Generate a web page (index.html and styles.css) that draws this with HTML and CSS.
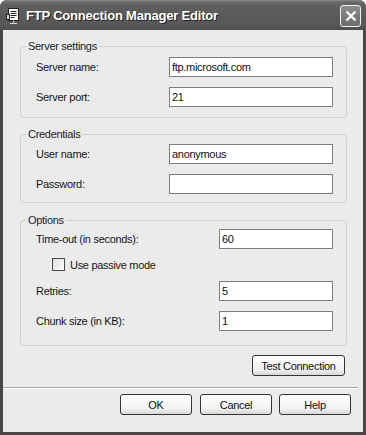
FILE: index.html
```html
<!DOCTYPE html>
<html lang="en">
<head>
  <meta charset="UTF-8">
  <title>FTP Connection Manager Editor</title>
  <link rel="stylesheet" href="styles.css">
</head>
<body>
  <div class="window">
    <div class="titlebar">
      <svg class="app-icon" width="15" height="16" viewBox="0 0 15 16">
        <rect x="2.5" y="0.5" width="10" height="12" fill="#fff" stroke="#222"/>
        <path d="M4.5 3.5h6M4.5 5.5h6M4.5 7.5h6M4.5 9.5h4" stroke="#222"/>
        <rect x="0.5" y="6.5" width="3" height="5" fill="#ddd" stroke="#222"/>
        <path d="M7.5 12.5v2M4 15.5h7" stroke="#ddd"/>
      </svg>
      <span class="title">FTP Connection Manager Editor</span>
      <div class="close">
        <svg width="12" height="12" viewBox="0 0 12 12">
          <path d="M1.5 1.5l9 9M10.5 1.5l-9 9" stroke="#fff" stroke-width="2.4"/>
        </svg>
      </div>
    </div>

    <div class="client">
      <div class="content">
        <fieldset class="group group-server">
          <legend>Server settings</legend>
          <div class="row">
            <label>Server name:</label>
            <input class="field wide" type="text" value="ftp.microsoft.com">
          </div>
          <div class="row">
            <label>Server port:</label>
            <input class="field wide" type="text" value="21">
          </div>
        </fieldset>

        <fieldset class="group group-credentials">
          <legend>Credentials</legend>
          <div class="row">
            <label>User name:</label>
            <input class="field wide" type="text" value="anonymous">
          </div>
          <div class="row">
            <label>Password:</label>
            <input class="field wide" type="password" value="">
          </div>
        </fieldset>

        <fieldset class="group group-options">
          <legend>Options</legend>
          <div class="row">
            <label>Time-out (in seconds):</label>
            <input class="field narrow" type="text" value="60">
          </div>
          <label class="check"><span class="box"></span>Use passive mode</label>
          <div class="row">
            <label>Retries:</label>
            <input class="field narrow" type="text" value="5">
          </div>
          <div class="row">
            <label>Chunk size (in KB):</label>
            <input class="field narrow" type="text" value="1">
          </div>
        </fieldset>

        <div class="test-row">
          <button class="btn btn-test">Test Connection</button>
        </div>
      </div>

      <div class="separator"></div>

      <div class="footer">
        <button class="btn">OK</button>
        <button class="btn">Cancel</button>
        <button class="btn">Help</button>
      </div>
    </div>
  </div>
</body>
</html>
```

FILE: styles.css
```css
body {
  margin: 0;
  padding: 0;
  background-color: #ffffff;
  font-family: "Liberation Sans", Arial, sans-serif;
  font-size: 11px;
  letter-spacing: -0.3px;
  color: #161616;
}
.window {
  width: 366px;
  height: 435px;
  background-color: #474747;
  border-radius: 7px 7px 0 0;
  box-sizing: border-box;
  display: flex;
  flex-direction: column;
}
.titlebar {
  height: 30px;
  display: flex;
  align-items: center;
  padding: 0 5px 0 6px;
  background: linear-gradient(#8a8a8a 0, #6a6a6a 2px, #5e5e5e 6px, #585858 24px, #4e4e4e 30px);
  border-radius: 7px 7px 0 0;
}
.app-icon {
  flex: none;
  margin-top: 1px;
}
.title {
  margin-left: 5px;
  color: #ffffff;
  font-weight: bold;
  font-size: 13px;
  letter-spacing: -0.2px;
  text-shadow: 1px 1px 0 #222222;
  flex: 1;
}
.close {
  width: 19px;
  height: 20px;
  border: 1px solid #f2f2f2;
  border-radius: 3px;
  background: linear-gradient(#8c8c8c, #6c6c6c);
  display: flex;
  align-items: center;
  justify-content: center;
  margin-top: 1px;
}
.client {
  flex: 1;
  margin: 0 3px 3px;
  background-color: #ebebeb;
  display: flex;
  flex-direction: column;
}
.content {
  padding: 9px 16px 0 17px;
}
.group {
  margin: 0;
  padding: 4px 13px 10px 15px;
  border: 1px solid #cfcfcf;
  border-radius: 4px;
  min-width: 0;
}
.group legend {
  margin-left: -10px;
  padding: 0 2px;
  line-height: 14px;
  color: #222222;
}
.group-credentials {
  margin-top: 9px;
  padding-top: 3px;
  padding-bottom: 8px;
}
.group-options {
  margin-top: 10px;
  padding-top: 2px;
  padding-bottom: 14px;
}
.row {
  display: flex;
  align-items: center;
  justify-content: space-between;
  height: 20px;
}
.row + .row {
  margin-top: 10px;
}
.field {
  box-sizing: border-box;
  height: 20px;
  margin: 0;
  padding: 0 2px;
  border: 1px solid #7d7d7d;
  background-color: #ffffff;
  font-family: inherit;
  font-size: 11px;
  letter-spacing: -0.3px;
  color: #111111;
  outline: none;
}
.wide {
  width: 164px;
}
.narrow {
  width: 114px;
}
.check {
  display: flex;
  align-items: center;
  height: 13px;
  margin: 9px 0 10px 16px;
}
.box {
  width: 13px;
  height: 13px;
  box-sizing: border-box;
  border: 1px solid #4a4a4a;
  background: linear-gradient(135deg, #dcdcdc, #ffffff);
  margin-right: 5px;
}
.test-row {
  display: flex;
  justify-content: flex-end;
  margin-top: 9px;
  padding-right: 2px;
}
.btn {
  box-sizing: border-box;
  width: 72px;
  height: 21px;
  margin: 0;
  padding: 0;
  border: 1px solid #333333;
  border-radius: 3px;
  background: linear-gradient(#ffffff, #f2f2f2 70%, #d8d8d8);
  font-family: inherit;
  font-size: 11px;
  letter-spacing: -0.3px;
  color: #111111;
}
.btn-test {
  width: 93px;
}
.separator {
  margin-top: 11px;
  margin-right: 5px;
  border-top: 1px solid #a6a6a6;
  border-bottom: 1px solid #ffffff;
}
.footer {
  display: flex;
  justify-content: flex-end;
  gap: 8px;
  padding: 5px 12px 0 0;
}
.footer .btn + .btn + .btn {
  margin-left: -1px;
}
```
